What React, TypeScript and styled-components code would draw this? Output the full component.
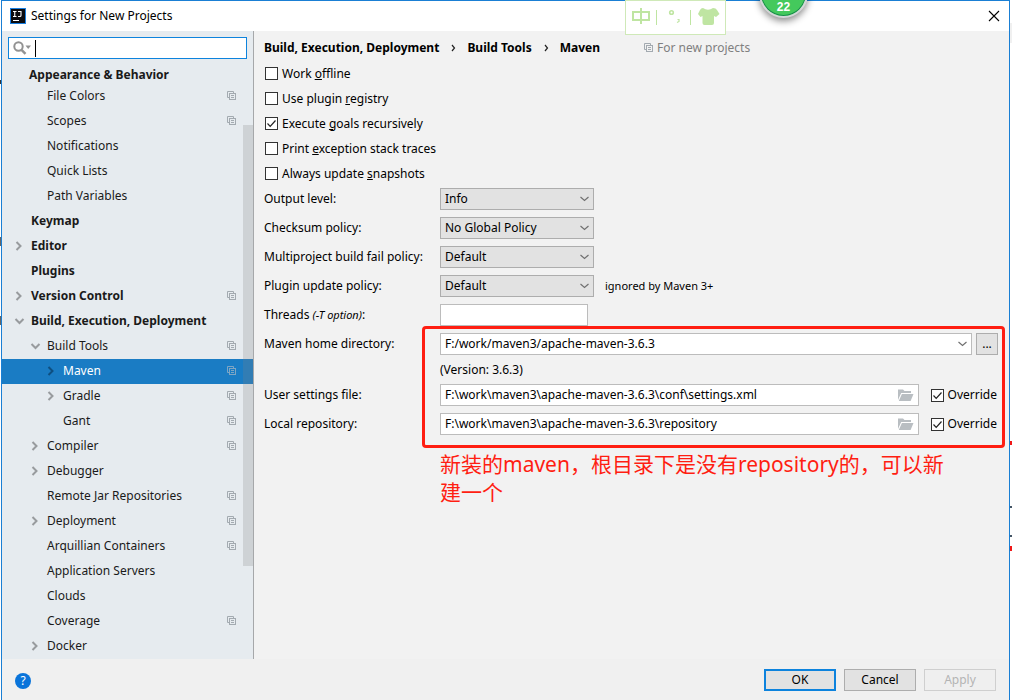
import React, { useState } from "react";
import styled, { createGlobalStyle, css } from "styled-components";

const UI_FONT = `"Noto Sans", "Noto Sans CJK SC", sans-serif`;

const GlobalStyle = createGlobalStyle`
  *, *::before, *::after { box-sizing: border-box; }
  body {
    margin: 0;
    background: #fff;
    color: #000;
    font-family: ${UI_FONT};
    font-size: 12px;
    line-height: 16px;
  }
  button, input, select { font: inherit; color: inherit; margin: 0; }
`;

/* ---------- window frame ---------- */

const Desktop = styled.div`
  position: relative;
  display: flex;
  min-height: 100vh;
  overflow: hidden;
`;

const BackdropEdge = styled.div<{ $side: "left" | "right" }>`
  flex: none;
  width: ${(p) => (p.$side === "left" ? 1 : 2)}px;
  background: ${(p) =>
    p.$side === "left"
      ? `linear-gradient(#fff 80px, #333 80px 84px, #fff 84px 237px, #666 237px 246px, #fff 246px 316px, #666 316px 325px, #fff 325px)`
      : `linear-gradient(#fff 23px, #f0f0f0 23px 43px, #fff 43px 441px, #f01818 441px 445px, #fff 445px 506px, #456 506px 508px, #fff 508px 535px, #456 535px 537px, #fff 537px 546px, #f01818 546px 551px, #fff 551px)`};
`;

const Window = styled.div`
  flex: 1;
  min-width: 0;
  display: flex;
  flex-direction: column;
  border: solid #1a7fd4;
  border-width: 1px 1px 0;
  background: #f2f2f2;
`;

const TitleBar = styled.header`
  display: flex;
  align-items: center;
  gap: 5px;
  height: 30px;
  padding: 0 8px;
  background: #fff;
`;

const Title = styled.h1`
  flex: 1;
  margin: 0;
  font-size: 12px;
  font-weight: 400;
`;

const CloseButton = styled.button`
  display: grid;
  place-items: center;
  width: 14px;
  height: 14px;
  padding: 0;
  border: 0;
  background: none;
`;

const Body = styled.div`
  flex: 1;
  display: flex;
`;

/* ---------- sidebar ---------- */

const Sidebar = styled.nav`
  position: relative;
  flex: none;
  width: 252px;
  padding-top: 6px;
  border-right: 1px solid #a6a8aa;
  background: #e6ebef;
  color: #1a1a1a;
`;

const SearchBox = styled.label`
  display: flex;
  align-items: center;
  gap: 3px;
  height: 22px;
  margin: 0 6px;
  padding: 0 4px;
  border: 1px solid #0d83dd;
  background: #fff;
`;

const SearchInput = styled.input`
  flex: 1;
  min-width: 0;
  padding: 0;
  border: 0;
  outline: 0;
  background: none;
`;

const Caret = styled.span`
  width: 1px;
  height: 17px;
  background: #000;
`;

const TreeHeading = styled.h2`
  margin: 7px 0 0;
  padding-left: 27px;
  font-size: 12px;
  font-weight: 700;
  line-height: 18px;
`;

const Tree = styled.ul`
  margin: 0;
  padding: 0;
  list-style: none;
`;

const TreeRow = styled.button<{ $level: number; $bold?: boolean; $selected?: boolean }>`
  display: flex;
  align-items: center;
  gap: 5px;
  width: 100%;
  height: 25px;
  padding: 0 16px 2px ${(p) => 12 + p.$level * 16}px;
  border: 0;
  background: none;
  text-align: left;
  font-weight: ${(p) => (p.$bold ? 700 : 400)};
  ${(p) =>
    p.$selected &&
    css`
      background: #1a7cc4;
      color: #fff;
    `}
`;

const TreeArrow = styled.svg<{ $selected?: boolean }>`
  flex: none;
  width: 12px;
  height: 12px;
  fill: none;
  stroke: ${(p) => (p.$selected ? "#0e4f80" : "#989b9e")};
  stroke-width: 2;
`;

const TreeLabel = styled.span`
  flex: 1;
  white-space: nowrap;
`;

const ScrollThumb = styled.div`
  position: absolute;
  top: 94px;
  right: 0;
  width: 10px;
  height: 441px;
  background: rgba(128, 128, 128, 0.24);
`;

/* ---------- settings page ---------- */

const Content = styled.main`
  flex: 1;
  min-width: 0;
  padding: 8px 10px 0;
`;

const Breadcrumb = styled.div`
  display: flex;
  align-items: center;
  height: 18px;
  margin-bottom: 4px;
  white-space: nowrap;
`;

const Crumb = styled.span`
  font-weight: 700;
`;

const CrumbArrow = styled.svg`
  width: 28px;
  height: 10px;
  fill: none;
  stroke: #222;
`;

const Scope = styled.span`
  display: flex;
  align-items: center;
  gap: 3px;
  margin-left: 44px;
  color: #808080;
`;

const CheckList = styled.div`
  margin-bottom: 2px;
`;

const CheckLabel = styled.label<{ $inline?: boolean }>`
  display: flex;
  align-items: center;
  gap: 4px;
  width: fit-content;
  height: ${(p) => (p.$inline ? 22 : 25)}px;
  padding: ${(p) => (p.$inline ? "0 2px 0 0" : "0 0 0 1px")};
  white-space: nowrap;
`;

const CheckCell = styled.span`
  display: grid;
  & > * { grid-area: 1 / 1; }
`;

const CheckInput = styled.input`
  appearance: none;
  width: 13px;
  height: 13px;
  border: 1px solid #333;
  background: #fff;
  & + svg { visibility: hidden; pointer-events: none; }
  &:checked + svg { visibility: visible; }
`;

const FormRows = styled.div`
  position: relative;
  display: grid;
  grid-template-columns: 176px 1fr;
  gap: 7px 0;
  margin-bottom: 7px;
`;

const FieldLabel = styled.label`
  line-height: 22px;
  white-space: nowrap;
`;

const Hint = styled.em`
  font-size: 11px;
`;

const FieldCell = styled.div`
  display: flex;
  align-items: center;
  min-width: 0;
`;

const SelectFrame = styled.span<{ $wide?: boolean }>`
  display: grid;
  align-items: center;
  ${(p) => (p.$wide ? "flex: 1;" : "width: 154px;")}
  & > * { grid-area: 1 / 1; }
  & > svg { justify-self: end; margin-right: 4px; pointer-events: none; }
`;

const Select = styled.select<{ $wide?: boolean }>`
  appearance: none;
  width: 100%;
  height: 22px;
  padding: 0 20px 0 4px;
  border: 1px solid ${(p) => (p.$wide ? "#bcbcbc" : "#adadad")};
  border-radius: 0;
  background: ${(p) => (p.$wide ? "#fff" : "#e2e2e2")};
`;

const Note = styled.span`
  margin-left: 11px;
  font-size: 11px;
`;

const ThreadsInput = styled.input`
  width: 148px;
  height: 22px;
  border: 1px solid #bcbcbc;
  background: #fff;
`;

const BrowseButton = styled.button`
  width: 22px;
  height: 22px;
  margin: 0 1px 0 4px;
  padding: 0;
  border: 1px solid #adadad;
  background: #e2e2e2;
`;

const VersionText = styled.div`
  grid-column: 2;
  line-height: 15px;
`;

const PathFrame = styled.span`
  flex: 1;
  display: flex;
  align-items: center;
  min-width: 0;
  height: 22px;
  margin-right: 12px;
  padding: 0 4px;
  border: 1px solid #bcbcbc;
  background: #fff;
`;

const PathInput = styled.input`
  flex: 1;
  min-width: 0;
  padding: 0;
  border: 0;
  outline: 0;
  background: none;
`;

const RedFrame = styled.div`
  position: absolute;
  inset: -7px -6px -13px 158px;
  border: 3px solid #ff1e12;
  border-radius: 4px;
  pointer-events: none;
`;

const Annotation = styled.p`
  max-width: 520px;
  margin: 15px 0 0 176px;
  color: #ff1e12;
  font-size: 21px;
  font-weight: 400;
  line-height: 28px;
`;

/* ---------- footer ---------- */

const Footer = styled.footer`
  display: flex;
  gap: 8px;
  height: 41px;
  padding: 10px 13px 0;
  background: #f0f0f0;
`;

const HelpButton = styled.button`
  width: 16px;
  height: 16px;
  margin: 4px auto 0 0;
  padding: 0;
  border: 0;
  border-radius: 50%;
  background: #0a74da;
  color: #fff;
  font-size: 12px;
  line-height: 16px;
`;

const DialogButton = styled.button<{ $primary?: boolean }>`
  width: 72px;
  height: 22px;
  padding: 0;
  border: ${(p) => (p.$primary ? "2px solid #0d83dd" : "1px solid #adadad")};
  background: #e2e2e2;
  &:disabled {
    border-color: #cfcfcf;
    background: #efefef;
    color: #b4b4b4;
  }
`;

/* ---------- floating desktop widgets ---------- */

const ImeBar = styled.div`
  position: absolute;
  top: 0;
  left: 625px;
  width: 101px;
  height: 35px;
  border: 1px solid #cfe9b8;
  background: #fff;
`;

const CounterBadge = styled.div`
  position: absolute;
  top: -31px;
  left: 759px;
  width: 49px;
  height: 49px;
  padding-top: 28px;
  border: 2px solid #d4d6d8;
  border-radius: 50%;
  background: #44c95c;
  box-shadow: inset 0 0 0 1px #188a4c, 0 3px 7px rgba(0, 0, 0, 0.45);
  color: #fff;
  font-family: "Liberation Sans", sans-serif;
  font-size: 12px;
  font-weight: 700;
  text-align: center;
`;

/* ---------- drawings ---------- */

const CopyIcon = ({ color = "#a3aab0" }: { color?: string }) => (
  <svg width="10" height="10" viewBox="0 0 10 10" fill="none" stroke={color} aria-hidden>
    <path d="M2.5 6.5H0.5V0.5H6.5V2" />
    <rect x="2.5" y="2.5" width="6" height="6" />
    <path d="M4 4.5H7M4 6.5H7" />
  </svg>
);

const DownArrow = () => (
  <svg width="11" height="8" viewBox="0 0 11 8" fill="none" stroke="#707070" aria-hidden>
    <path d="M1.5 2L5.5 5.400L9.500 2" strokeWidth="1.2" />
  </svg>
);

const FolderIcon = () => (
  <svg width="16" height="12" viewBox="0 0 16 12" fill="#b9bec2" aria-hidden>
    <path d="M0 11V0.5H5L6.5 2H13V4H3.2L0 11Z" />
    <path d="M3.9 5H15.5L12.6 12H0.8L3.9 5Z" />
  </svg>
);

const SearchIcon = () => (
  <svg width="19" height="14" viewBox="0 0 19 14" fill="none" aria-hidden>
    <circle cx="5.5" cy="5.5" r="4.2" stroke="#929292" strokeWidth="2" />
    <path d="M8.5 8.8L12.5 12.8" stroke="#929292" strokeWidth="2.4" />
    <path d="M12.5 4.5H18L15.2 8Z" fill="#929292" />
  </svg>
);

const AppLogo = () => (
  <svg width="16" height="16" viewBox="0 0 16 16" aria-hidden>
    <rect width="16" height="16" fill="#1b7fe0" />
    <rect x="1" y="1" width="14" height="14" fill="#0c0c10" />
    <path
      d="M3 3.5H6.5M4.75 3.5V8.5M3 8.5H6.5M8 3.5H11V7.5Q11 8.5 9.8 8.5H8"
      fill="none"
      stroke="#fff"
      strokeWidth="1.1"
    />
    <rect x="3" y="12" width="6" height="1" fill="#fff" />
  </svg>
);

const ImeGlyphs = () => (
  <svg width="99" height="33" viewBox="0 0 99 33" fill="none" stroke="#bfe5a2" aria-hidden>
    <path d="M7 11H23V19H7ZM15 7V23" strokeWidth="2" />
    <path d="M30.5 9V24M64.500 9V24" />
    <circle cx="45.5" cy="11.500" r="1.8" strokeWidth="1.6" />
    <path d="M51.5 18.500H53V20.500L51 21.500" strokeWidth="1.200" />
    <path
      d="M77 7Q82 10.500 87 7Q90 7 91 9L93.500 13L90 16L88 15V22Q88 24 86 24H78.500Q76.500 24 76.500 22V15L74.500 16L72 13L74 9Q75 7 77 7Z"
      fill="#bfe5a2"
      stroke="none"
    />
  </svg>
);

/* ---------- pieces ---------- */

type Item = {
  label: string;
  level: number;
  bold?: boolean;
  arrow?: "right" | "down";
  copy?: boolean;
};

const items: Item[] = [
  { label: "File Colors", level: 1, copy: true },
  { label: "Scopes", level: 1, copy: true },
  { label: "Notifications", level: 1 },
  { label: "Quick Lists", level: 1 },
  { label: "Path Variables", level: 1 },
  { label: "Keymap", level: 0, bold: true },
  { label: "Editor", level: 0, bold: true, arrow: "right" },
  { label: "Plugins", level: 0, bold: true },
  { label: "Version Control", level: 0, bold: true, arrow: "right", copy: true },
  { label: "Build, Execution, Deployment", level: 0, bold: true, arrow: "down" },
  { label: "Build Tools", level: 1, arrow: "down", copy: true },
  { label: "Maven", level: 2, arrow: "right", copy: true },
  { label: "Gradle", level: 2, arrow: "right", copy: true },
  { label: "Gant", level: 2, copy: true },
  { label: "Compiler", level: 1, arrow: "right", copy: true },
  { label: "Debugger", level: 1, arrow: "right" },
  { label: "Remote Jar Repositories", level: 1, copy: true },
  { label: "Deployment", level: 1, arrow: "right", copy: true },
  { label: "Arquillian Containers", level: 1, copy: true },
  { label: "Application Servers", level: 1 },
  { label: "Clouds", level: 1 },
  { label: "Coverage", level: 1, copy: true },
  { label: "Docker", level: 1, arrow: "right" },
];

function Check({
  children,
  checked,
  inline,
}: {
  children: React.ReactNode;
  checked?: boolean;
  inline?: boolean;
}) {
  return (
    <CheckLabel $inline={inline}>
      <CheckCell>
        <CheckInput type="checkbox" defaultChecked={checked} />
        <svg width="13" height="13" viewBox="0 0 13 13" fill="none" stroke="#222" aria-hidden>
          <path d="M2.500 6.500L5.200 9.300L10.500 3.500" strokeWidth="1.2" />
        </svg>
      </CheckCell>
      <span>{children}</span>
    </CheckLabel>
  );
}

function SelectField({
  id,
  label,
  value,
  note,
}: {
  id: string;
  label: string;
  value: string;
  note?: string;
}) {
  return (
    <>
      <FieldLabel htmlFor={id}>{label}</FieldLabel>
      <FieldCell>
        <SelectFrame>
          <Select id={id}>
            <option>{value}</option>
          </Select>
          <DownArrow />
        </SelectFrame>
        {note && <Note>{note}</Note>}
      </FieldCell>
    </>
  );
}

function PathField({ id, label, value }: { id: string; label: string; value: string }) {
  return (
    <>
      <FieldLabel htmlFor={id}>{label}</FieldLabel>
      <FieldCell>
        <PathFrame>
          <PathInput id={id} defaultValue={value} />
          <FolderIcon />
        </PathFrame>
        <Check inline checked>
          Override
        </Check>
      </FieldCell>
    </>
  );
}

const Separator = () => (
  <CrumbArrow viewBox="0 0 28 10" aria-hidden>
    <path d="M13 2L15.500 5L13 8" strokeWidth="1.2" />
  </CrumbArrow>
);

export default function App() {
  const [selected, setSelected] = useState("Maven");

  return (
    <Desktop>
      <GlobalStyle />
      <BackdropEdge $side="left" />
      <Window>
        <TitleBar>
          <AppLogo />
          <Title>Settings for New Projects</Title>
          <CloseButton aria-label="Close">
            <svg width="12" height="12" viewBox="0 0 12 12" stroke="#000" aria-hidden>
              <path d="M1 1L11 11M11 1L1 11" strokeWidth="1.1" />
            </svg>
          </CloseButton>
        </TitleBar>

        <Body>
          <Sidebar>
            <SearchBox>
              <SearchIcon />
              <Caret />
              <SearchInput aria-label="Search settings" />
            </SearchBox>
            <TreeHeading>Appearance &amp; Behavior</TreeHeading>
            <Tree>
              {items.map((item) => {
                const active = item.label === selected;
                return (
                  <li key={item.label}>
                    <TreeRow
                      $level={item.level}
                      $bold={item.bold}
                      $selected={active}
                      onClick={() => setSelected(item.label)}
                    >
                      <TreeArrow viewBox="0 0 12 12" $selected={active} aria-hidden>
                        {item.arrow === "right" && <path d="M2.500 2L6.500 6L2.500 10" />}
                        {item.arrow === "down" && <path d="M1.500 4L5.500 8L9.500 4" />}
                      </TreeArrow>
                      <TreeLabel>{item.label}</TreeLabel>
                      {item.copy && <CopyIcon color={active ? "#7fa6c4" : undefined} />}
                    </TreeRow>
                  </li>
                );
              })}
            </Tree>
            <ScrollThumb />
          </Sidebar>

          <Content>
            <Breadcrumb>
              <Crumb>Build, Execution, Deployment</Crumb>
              <Separator />
              <Crumb>Build Tools</Crumb>
              <Separator />
              <Crumb>Maven</Crumb>
              <Scope>
                <CopyIcon />
                For new projects
              </Scope>
            </Breadcrumb>

            <CheckList>
              <Check>
                Work <u>o</u>ffline
              </Check>
              <Check>
                Use plugin <u>r</u>egistry
              </Check>
              <Check checked>
                Execute <u>g</u>oals recursively
              </Check>
              <Check>
                Print <u>e</u>xception stack traces
              </Check>
              <Check>
                Always update <u>s</u>napshots
              </Check>
            </CheckList>

            <FormRows>
              <SelectField id="output" label="Output level:" value="Info" />
              <SelectField id="checksum" label="Checksum policy:" value="No Global Policy" />
              <SelectField id="fail" label="Multiproject build fail policy:" value="Default" />
              <SelectField
                id="update"
                label="Plugin update policy:"
                value="Default"
                note="ignored by Maven 3+"
              />
              <FieldLabel htmlFor="threads">
                Threads <Hint>(-T option)</Hint>:
              </FieldLabel>
              <FieldCell>
                <ThreadsInput id="threads" />
              </FieldCell>
            </FormRows>

            <FormRows>
              <FieldLabel htmlFor="home">Maven home directory:</FieldLabel>
              <FieldCell>
                <SelectFrame $wide>
                  <Select id="home" $wide>
                    <option>F:/work/maven3/apache-maven-3.6.3</option>
                  </Select>
                  <DownArrow />
                </SelectFrame>
                <BrowseButton aria-label="Browse">...</BrowseButton>
              </FieldCell>
              <VersionText>(Version: 3.6.3)</VersionText>
              <PathField
                id="settings"
                label="User settings file:"
                value="F:\work\maven3\apache-maven-3.6.3\conf\settings.xml"
              />
              <PathField
                id="repo"
                label="Local repository:"
                value="F:\work\maven3\apache-maven-3.6.3\repository"
              />
              <RedFrame />
            </FormRows>

            <Annotation lang="zh-CN">
              新装的maven，根目录下是没有repository的，可以新建一个
            </Annotation>
          </Content>
        </Body>

        <Footer>
          <HelpButton aria-label="Help">?</HelpButton>
          <DialogButton $primary>OK</DialogButton>
          <DialogButton>Cancel</DialogButton>
          <DialogButton disabled>Apply</DialogButton>
        </Footer>
      </Window>
      <BackdropEdge $side="right" />

      <ImeBar>
        <ImeGlyphs />
      </ImeBar>
      <CounterBadge>22</CounterBadge>
    </Desktop>
  );
}
